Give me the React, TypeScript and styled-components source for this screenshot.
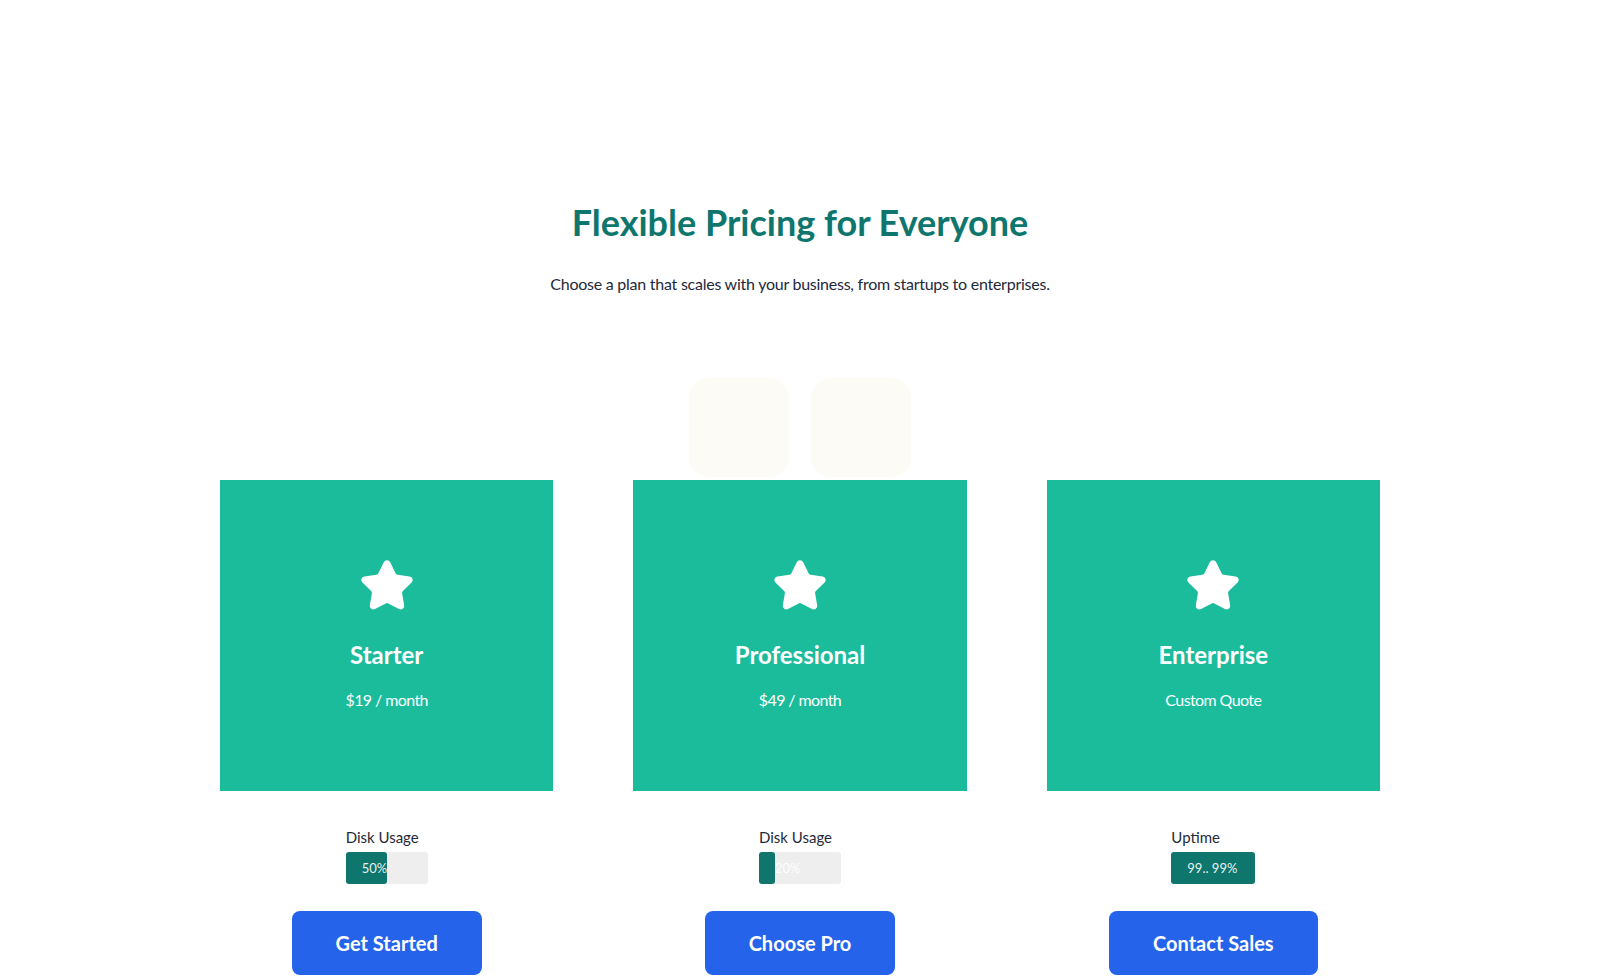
import React from "react";
import styled, { createGlobalStyle } from "styled-components";
import { Star } from "lucide-react";

const GlobalStyle = createGlobalStyle`
  html, body {
    margin: 0;
    padding: 0;
    background: #ffffff;
  }
  body {
    font-family: "Lato", "Noto Sans", sans-serif;
    color: #1e293b;
  }
  * { box-sizing: border-box; }
`;

const Page = styled.main`
  display: flex;
  flex-direction: column;
  align-items: center;
  padding-top: 201px;
`;

const Title = styled.h1`
  margin: 0;
  font-size: 36px;
  line-height: 43px;
  font-weight: 700;
  color: #0f766e;
  text-align: center;
`;

const Subtitle = styled.p`
  margin: 27px 0 0;
  font-size: 16px;
  line-height: 25.5px;
  letter-spacing: -0.25px;
  color: #1e293b;
  text-align: center;
`;

const GhostRow = styled.div`
  display: flex;
  gap: 22px;
  margin-top: 81px;
`;

const Ghost = styled.div`
  width: 100px;
  height: 99px;
  border-radius: 20px;
  background: #fcfbf5;
`;

const Grid = styled.div`
  display: grid;
  grid-template-columns: repeat(3, 1fr);
  column-gap: 80px;
  width: 1160px;
  margin-top: 3px;
`;

const Column = styled.div`
  display: flex;
  flex-direction: column;
  align-items: center;
`;

const Card = styled.div`
  width: 100%;
  height: 311px;
  background: #1abc9c;
  color: #ffffff;
  display: flex;
  flex-direction: column;
  align-items: center;
  justify-content: center;
`;

const PlanName = styled.h2`
  margin: 27px 0 0;
  font-size: 24px;
  line-height: 28.8px;
  font-weight: 700;
`;

const Price = styled.p`
  margin: 17px 0 0;
  font-size: 16px;
  line-height: 25.5px;
  letter-spacing: -0.6px;
`;

const Metric = styled.div`
  margin-top: 35px;
  display: flex;
  flex-direction: column;
  align-items: flex-start;
`;

const MetricLabel = styled.span`
  font-size: 15px;
  line-height: 22.5px;
  color: #1f2937;
`;

const Track = styled.div<{ $w: number }>`
  margin-top: 3.5px;
  width: ${(p) => p.$w}px;
  height: 32px;
  border-radius: 3px;
  background: #eeeeee;
  display: flex;
`;

const Fill = styled.div`
  height: 100%;
  border-radius: 3px;
  background: #0f766e;
  padding-left: 16px;
  display: flex;
  align-items: center;
  font-size: 13px;
  color: rgba(255, 255, 255, 0.92);
  white-space: nowrap;
  overflow: visible;
`;

const Button = styled.button`
  margin-top: 27px;
  border: none;
  border-radius: 8px;
  background: #2563eb;
  color: #ffffff;
  font-family: inherit;
  font-size: 20px;
  line-height: 24px;
  font-weight: 700;
  padding: 20px 44px;
  cursor: pointer;
`;

type Plan = {
  name: string;
  price: string;
  metric: string;
  value: string;
  pct: number;
  track: number;
  cta: string;
};

const plans: Plan[] = [
  { name: "Starter", price: "$19 / month", metric: "Disk Usage", value: "50%", pct: 50, track: 82, cta: "Get Started" },
  { name: "Professional", price: "$49 / month", metric: "Disk Usage", value: "20%", pct: 20, track: 82, cta: "Choose Pro" },
  { name: "Enterprise", price: "Custom Quote", metric: "Uptime", value: "99.. 99%", pct: 100, track: 84, cta: "Contact Sales" },
];

export default function App() {
  return (
    <>
      <GlobalStyle />
      <Page>
        <Title>Flexible Pricing for Everyone</Title>
        <Subtitle>Choose a plan that scales with your business, from startups to enterprises.</Subtitle>
        <GhostRow>
          <Ghost />
          <Ghost />
        </GhostRow>
        <Grid>
          {plans.map((p) => (
            <Column key={p.name}>
              <Card>
                <Star size={56} fill="#ffffff" color="#ffffff" strokeWidth={2} />
                <PlanName>{p.name}</PlanName>
                <Price>{p.price}</Price>
              </Card>
              <Metric>
                <MetricLabel>{p.metric}</MetricLabel>
                <Track $w={p.track}>
                  <Fill style={{ width: `${p.pct}%` }}>{p.value}</Fill>
                </Track>
              </Metric>
              <Button>{p.cta}</Button>
            </Column>
          ))}
        </Grid>
      </Page>
    </>
  );
}
